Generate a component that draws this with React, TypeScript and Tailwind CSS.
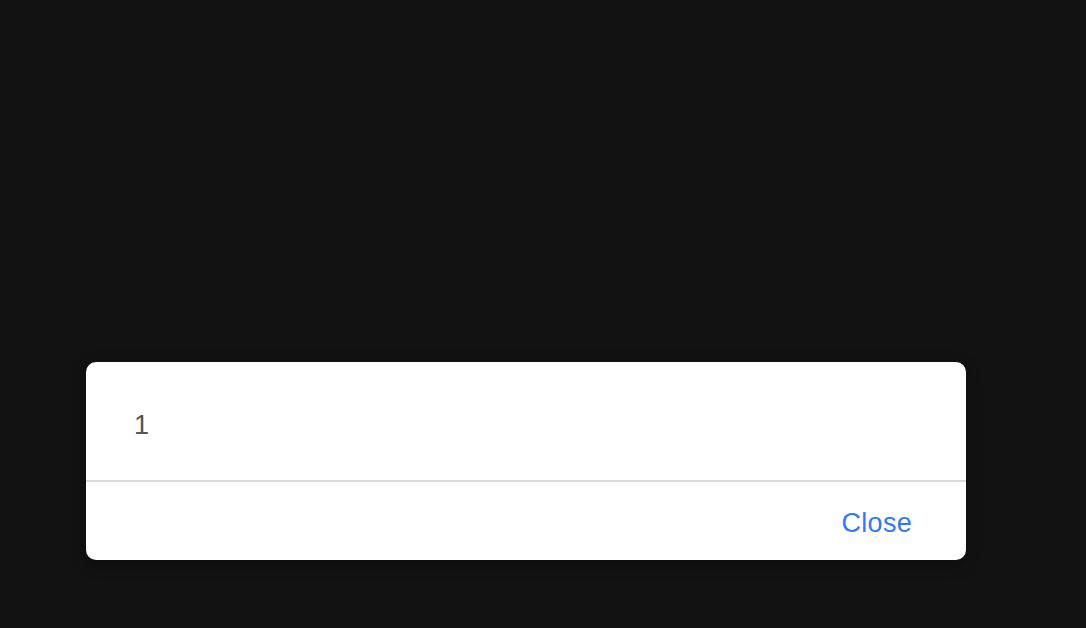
export default function App() {
    return (
        <div className="min-h-screen w-full bg-[#121212] pt-[362px] pl-[86px]" style={{ fontFamily: '"Liberation Sans", Arial, sans-serif' }}>
            <div className="w-[880px] bg-white rounded-[10px] overflow-hidden shadow-[0_4px_16px_rgba(0,0,0,0.3)]">
                {/* Тело */}
                <div className="h-[118px] flex items-center pl-[48px] pt-[8px]">
                    <span className="text-[27px] leading-none text-[#555555]">1</span>
                </div>
                <div className="h-[2px] bg-[#dadada]" />
                {/* Кнопки */}
                <div className="h-[78px] flex items-center justify-end pr-[54px] pt-[4px]">
                    <button className="text-[27px] leading-none text-[#3478f6] tracking-[0.3px]">Close</button>
                </div>
            </div>
        </div>
    );
}
